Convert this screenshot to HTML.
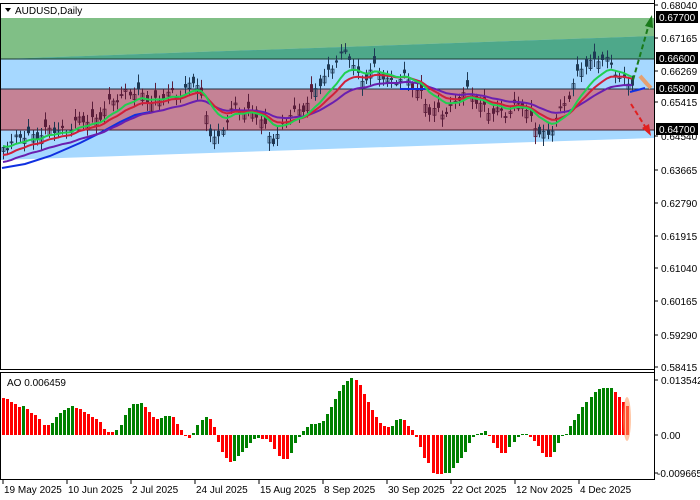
<!DOCTYPE html>
<html><head><meta charset="utf-8"><style>
html,body{margin:0;padding:0;background:#fff;width:700px;height:500px;overflow:hidden}
svg{display:block;font-family:"Liberation Sans",sans-serif}
</style></head><body>
<svg id="s" width="700" height="500" viewBox="0 0 700 500" xmlns="http://www.w3.org/2000/svg">
<rect width="700" height="500" fill="#fff"/>
<g id="zones">
<rect x="1" y="18" width="653" height="41" fill="#80bf86"/>
<polygon points="1,59 654,36 654,138 1,160" fill="#a6d8ff"/>
<polygon points="1,59 654,36 654,59" fill="#4ea88a"/>
<rect x="1" y="89" width="653" height="41" fill="#c58295"/>
<line x1="1" y1="59" x2="654" y2="59" stroke="#1a3a30" stroke-width="1"/>
<line x1="1" y1="89" x2="654" y2="89" stroke="#233040" stroke-width="1"/>
<line x1="1" y1="130" x2="654" y2="130" stroke="#4a1a2a" stroke-width="1"/>
</g>
<g id="candles"></g>
<g id="mas" fill="none" stroke-width="2"></g>
<g id="ao"></g>
<line x1="633" y1="80" x2="649" y2="24" stroke="#1a7a1a" stroke-width="2" stroke-dasharray="5,3"/>
<polygon points="652,15 645,26 653,28" fill="#1a7a1a"/>
<line x1="631" y1="104" x2="646" y2="128" stroke="#e02020" stroke-width="2" stroke-dasharray="5,3"/>
<polygon points="651,136 642,128 649,124" fill="#e02020"/>
<path d="M640,76 L647,84 L651,88" stroke="#e5a070" stroke-width="4" fill="none"/>
<ellipse cx="627" cy="419" rx="4" ry="22" fill="#ff9a60" opacity="0.55"/>
<rect x="0.5" y="3.5" width="654" height="366" fill="none" stroke="#000"/>
<rect x="0.5" y="372.5" width="654" height="107" fill="none" stroke="#000"/>
<line x1="654.5" y1="0" x2="654.5" y2="480" stroke="#000"/>
<g font-size="10" fill="#000">
<polygon points="5,8 11,8 8,12" fill="#000"/>
<text x="15" y="14">AUDUSD,Daily</text>
<text x="7" y="386">AO 0.006459</text>
</g>
<g id="axis" font-size="10"></g>
<g id="dates" font-size="10"></g>
</svg>
<script>
(function(){
var NS="http://www.w3.org/2000/svg";
function el(p,t,a,txt){var e=document.createElementNS(NS,t);for(var k in a)e.setAttribute(k,a[k]);if(txt!=null)e.textContent=txt;p.appendChild(e);return e;}
var ax=document.getElementById('axis');
var ticks=[["0.68040",5],["0.67165",38],["0.66269",71],["0.65415",102],["0.64540",136],["0.63665",170],["0.62790",203],["0.61915",236],["0.61040",268],["0.60165",301],["0.59290",335],["0.58415",367]];
ticks.forEach(function(t){el(ax,'line',{x1:654,y1:t[1],x2:658,y2:t[1],stroke:'#000'});el(ax,'text',{x:661,y:t[1]+4},t[0]);});
[["0.67700",17],["0.66600",58],["0.65800",88],["0.64700",129]].forEach(function(t){el(ax,'rect',{x:656,y:t[1]-6,width:42,height:12,fill:'#000'});el(ax,'text',{x:659,y:t[1]+4,fill:'#fff'},t[0]);});
[["0.013542",380],["0.00",435],["-0.009665",473]].forEach(function(t){el(ax,'line',{x1:654,y1:t[1],x2:658,y2:t[1],stroke:'#000'});el(ax,'text',{x:t[0][0]=='-'?657:661,y:t[1]+4},t[0]);});
var dg=document.getElementById('dates');
["19 May 2025","10 Jun 2025","2 Jul 2025","24 Jul 2025","15 Aug 2025","8 Sep 2025","30 Sep 2025","22 Oct 2025","12 Nov 2025","4 Dec 2025"].forEach(function(d,i){var x=3+i*64;el(dg,'line',{x1:x,y1:480,x2:x,y2:484,stroke:'#000'});el(dg,'text',{x:x+1,y:493},d);});
var kp=[[3,145],[30,135],[60,130],[100,115],[125,90],[150,100],[175,95],[195,80],[210,130],[218,140],[235,105],[255,115],[275,140],[290,115],[310,100],[325,75],[335,60],[345,55],[352,60],[360,80],[375,70],[390,80],[405,80],[420,90],[430,115],[445,110],[470,90],[490,115],[520,105],[540,130],[548,140],[560,110],[575,80],[585,65],[600,55],[612,70],[625,80],[632,82]];
function interp(x){for(var i=0;i<kp.length-1;i++){if(x<=kp[i+1][0]){var a=kp[i],b=kp[i+1];return a[1]+(b[1]-a[1])*(x-a[0])/(b[0]-a[0]);}}return kp[kp.length-1][1];}
var N=150,cl=[],xs=[];
for(var i=0;i<N;i++){var x=3+i*(629/(N-1));xs.push(x);cl.push(interp(x)+4*Math.sin(i*1.7)+3*Math.sin(i*0.9+1));}
var cg=document.getElementById('candles');
for(var i=0;i<N;i++){var c=cl[i];var o=c+8*Math.sin(i*2.9+0.5);
var ctop=Math.min(o,c),cbot=Math.max(o,c);
var hi=ctop-2-6*Math.abs(Math.sin(i*2.3)),lo=cbot+2+6*Math.abs(Math.cos(i*1.3));
var x=Math.round(xs[i])+0.5;var col=(c>130)?'#1e3550':(c>89?'#5a1d3a':'#1e3a55');
el(cg,'line',{x1:x,y1:hi,x2:x,y2:lo,stroke:col,'stroke-width':1});
var h=Math.max(1,cbot-ctop);
if(c<o)el(cg,'rect',{x:x-1.5,y:ctop,width:3,height:h,fill:'none',stroke:col,'stroke-width':0.8});
else el(cg,'rect',{x:x-1.5,y:ctop,width:3,height:h,fill:col});}
var mg=document.getElementById('mas');
function emaS(seed,p){var r=[seed],k=2/(p+1);for(var i=1;i<N;i++)r.push(r[i-1]+k*(cl[i]-r[i-1]));return r;}
function pl(arr,col){var s='';for(var i=0;i<arr.length;i++)s+=(s?' L':'M')+xs[i].toFixed(1)+','+arr[i].toFixed(1);el(mg,'path',{d:s,stroke:col});}
var e3=emaS(162,28),e2=emaS(155,15),e1=emaS(146,10);
el(mg,'path',{d:'M2,168 L25,164 L50,156 L80,143 L100,133 L120,122 L135,115 L150,112',stroke:'#1030e0','stroke-width':2});
el(mg,'path',{d:'M400,89 L430,89',stroke:'#1030e0','stroke-width':2});
el(mg,'path',{d:'M630,92 L645,88',stroke:'#1030e0','stroke-width':2});
pl(e3,'#6a1fb0');pl(e2,'#d0203a');pl(e1,'#20d050');
var A=[[37,'r'],[36,'r'],[33,'r'],[31,'r'],[28,'r'],[29,'g'],[26,'r'],[22,'r'],[20,'r'],[16,'r'],[10,'r'],[10,'r'],[12,'g'],[18,'g'],[22,'g'],[25,'g'],[27,'g'],[29,'g'],[27,'r'],[26,'r'],[23,'r'],[21,'r'],[18,'r'],[16,'r'],[13,'r'],[6,'r'],[3,'r'],[3,'r'],[5,'g'],[10,'g'],[20,'g'],[27,'g'],[31,'g'],[31,'g'],[32,'g'],[28,'r'],[23,'r'],[18,'r'],[16,'r'],[17,'g'],[19,'g'],[19,'g'],[18,'r'],[11,'r'],[5,'r'],[-1,'r'],[-3,'r'],[2,'g'],[10,'g'],[15,'g'],[18,'g'],[16,'r'],[8,'r'],[-7,'r'],[-17,'r'],[-23,'r'],[-27,'r'],[-26,'g'],[-21,'g'],[-17,'g'],[-13,'g'],[-8,'g'],[-4,'g'],[-3,'g'],[-4,'r'],[-4,'r'],[-7,'r'],[-14,'r'],[-21,'r'],[-24,'r'],[-24,'r'],[-18,'g'],[-8,'g'],[-2,'g'],[4,'g'],[8,'g'],[11,'g'],[11,'g'],[12,'g'],[14,'g'],[21,'g'],[28,'g'],[36,'g'],[44,'g'],[50,'g'],[54,'g'],[57,'g'],[55,'r'],[50,'r'],[41,'r'],[33,'r'],[25,'r'],[18,'r'],[12,'r'],[9,'r'],[8,'r'],[9,'g'],[15,'g'],[16,'g'],[15,'r'],
[9,'r'],[5,'r'],[-2,'r'],[-12,'r'],[-23,'r'],[-28,'r'],[-38,'r'],[-39,'r'],[-39,'r'],[-38,'g'],[-38,'g'],[-33,'g'],[-28,'g'],[-23,'g'],[-17,'g'],[-8,'g'],[-2,'g'],[1,'g'],[2,'g'],[4,'g'],[-1,'r'],[-8,'r'],[-13,'r'],[-18,'r'],[-18,'r'],[-12,'g'],[-7,'g'],[-2,'g'],[1,'g'],[1,'g'],[-2,'r'],[-6,'r'],[-11,'r'],[-18,'r'],[-22,'r'],[-22,'r'],[-17,'g'],[-8,'g'],[-1,'g'],[1,'g'],[9,'g'],[15,'g'],[21,'g'],[28,'g'],[33,'g'],[38,'g'],[43,'g'],[46,'g'],[47,'g'],[47,'g'],[47,'g'],[43,'r'],[38,'r'],[33,'r'],[29,'r']];
var ag=document.getElementById('ao'),M=A.length,pitch=(626-2)/(M-1);
for(var i=0;i<M;i++){var v=A[i][0],x=Math.round(2+i*pitch);var h=Math.max(1,Math.abs(v));
el(ag,'rect',{x:x,y:v>0?435-h:435,width:3,height:h,fill:A[i][1]=='r'?'#ff0000':'#008000'});}
})();
</script>
</body></html>
